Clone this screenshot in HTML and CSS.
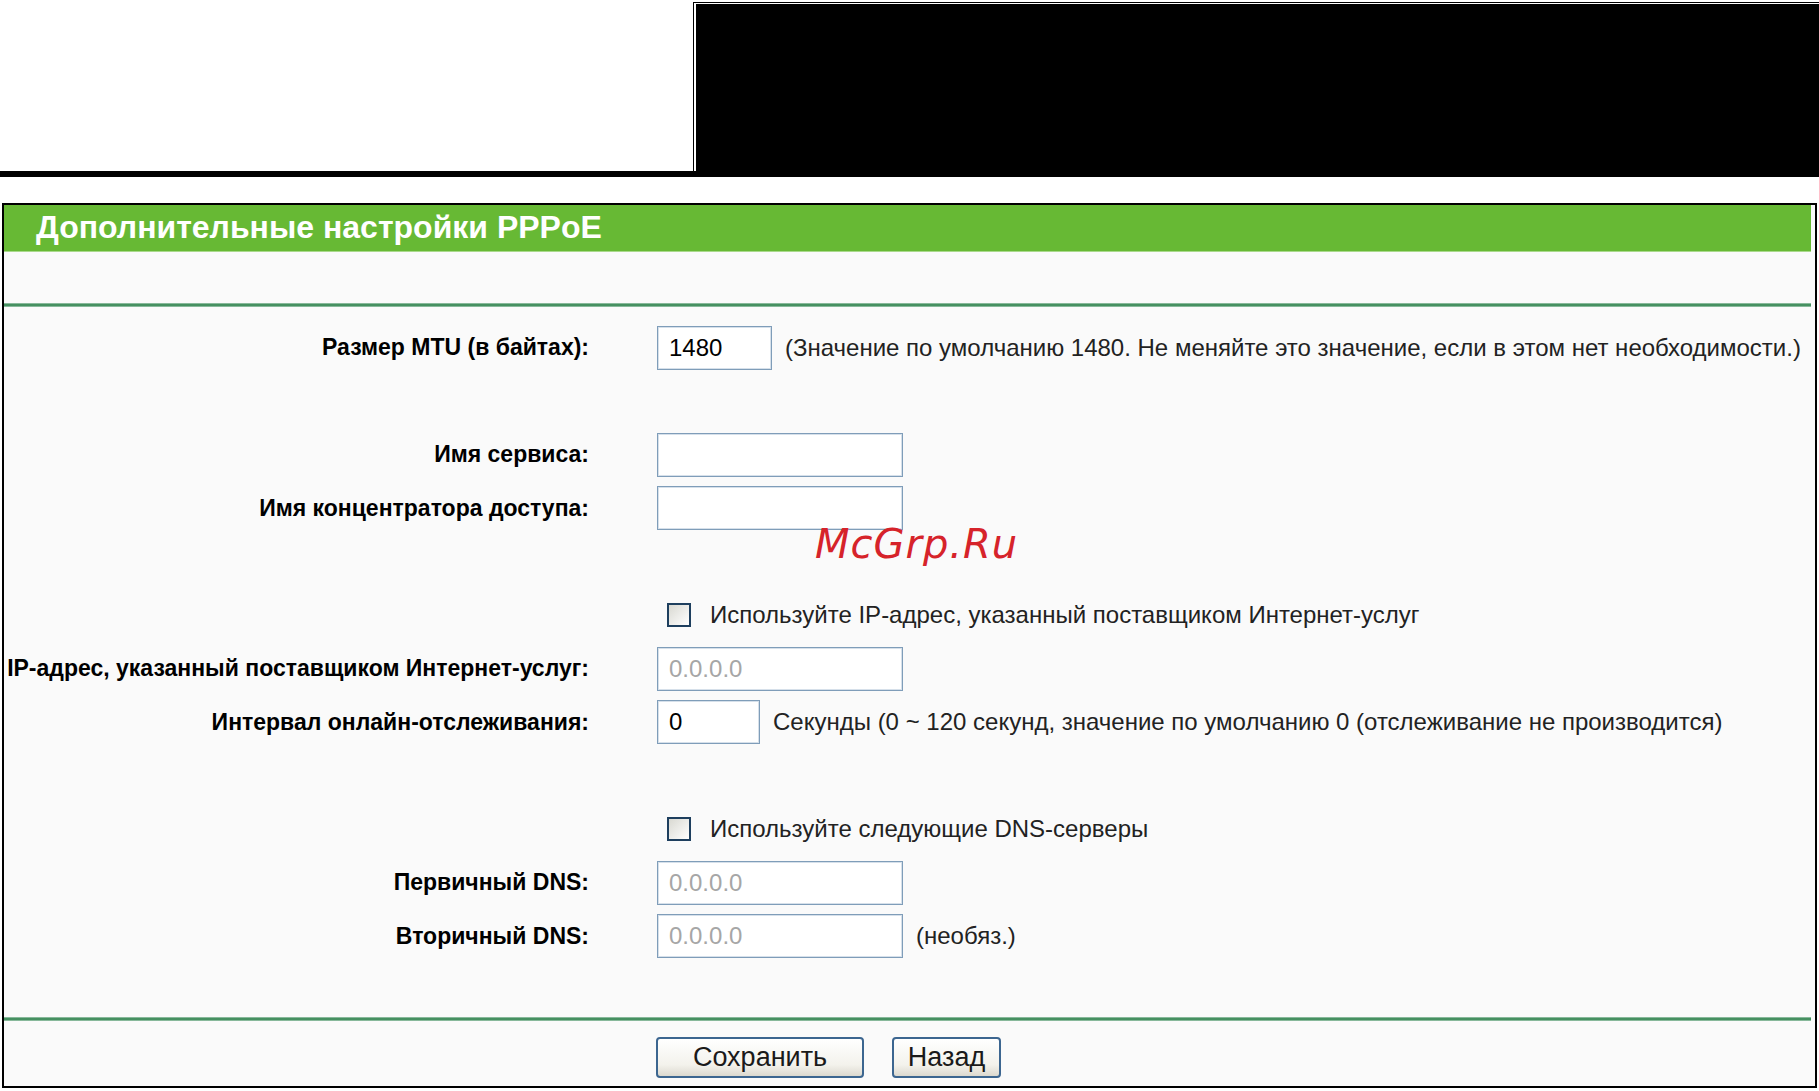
FILE: index.html
```html
<!DOCTYPE html>
<html lang="ru">
<head>
  <meta charset="UTF-8">
  <title>Дополнительные настройки PPPoE</title>
  <link rel="stylesheet" href="styles.css">
</head>
<body>
  <div class="top">
    <div class="top-blank"></div>
    <div class="top-box"><div class="top-fill"></div></div>
  </div>
  <div class="top-bar"></div>

  <div class="panel">
    <div class="panel-title">Дополнительные настройки PPPoE</div>
    <div class="spacer"></div>
    <div class="line"></div>

    <form class="form">
      <div class="row">
        <label class="label" for="mtu">Размер MTU (в байтах):</label>
        <div class="field">
          <input class="text w-mtu" type="text" id="mtu" value="1480">
          <span class="hint">(Значение по умолчанию 1480. Не меняйте это значение, если в этом нет необходимости.)</span>
        </div>
      </div>
      <div class="row"></div>
      <div class="row">
        <label class="label" for="service">Имя сервиса:</label>
        <div class="field"><input class="text w-wide" type="text" id="service"></div>
      </div>
      <div class="row">
        <label class="label" for="ac">Имя концентратора доступа:</label>
        <div class="field"><input class="text w-wide" type="text" id="ac"></div>
      </div>
      <div class="row"></div>
      <div class="row">
        <span class="label"></span>
        <label class="field check">
          <input class="box" type="checkbox">
          <span>Используйте IP-адрес, указанный поставщиком Интернет-услуг</span>
        </label>
      </div>
      <div class="row">
        <label class="label" for="ip">IP-адрес, указанный поставщиком Интернет-услуг:</label>
        <div class="field"><input class="text w-wide off" type="text" id="ip" value="0.0.0.0"></div>
      </div>
      <div class="row">
        <label class="label" for="echo">Интервал онлайн-отслеживания:</label>
        <div class="field">
          <input class="text w-echo" type="text" id="echo" value="0">
          <span class="hint">Секунды (0 ~ 120 секунд, значение по умолчанию 0 (отслеживание не производится)</span>
        </div>
      </div>
      <div class="row"></div>
      <div class="row">
        <span class="label"></span>
        <label class="field check">
          <input class="box" type="checkbox">
          <span>Используйте следующие DNS-серверы</span>
        </label>
      </div>
      <div class="row">
        <label class="label" for="dns1">Первичный DNS:</label>
        <div class="field"><input class="text w-wide off" type="text" id="dns1" value="0.0.0.0"></div>
      </div>
      <div class="row">
        <label class="label" for="dns2">Вторичный DNS:</label>
        <div class="field">
          <input class="text w-wide off" type="text" id="dns2" value="0.0.0.0">
          <span class="hint">(необяз.)</span>
        </div>
      </div>
      <div class="row"></div>
    </form>

    <div class="line"></div>
    <div class="buttons">
      <button class="btn btn-save" type="button">Сохранить</button>
      <button class="btn btn-back" type="button">Назад</button>
    </div>

    <div class="watermark">McGrp.Ru</div>
  </div>
</body>
</html>
```

FILE: styles.css
```css
* {
  box-sizing: border-box;
}
body {
  margin: 0;
  background: #ffffff;
  font-family: 'Liberation Sans', Arial, sans-serif;
  color: #000000;
}
.top {
  display: flex;
  height: 171px;
}
.top-blank {
  width: 693px;
}
.top-box {
  flex: 1;
  margin-top: 2px;
  border-left: 1px solid #000;
  border-top: 1px solid #000;
  padding: 1px 0 0 2px;
  background: #fff;
}
.top-fill {
  height: 100%;
  background: #000;
}
.top-bar {
  height: 6px;
  background: #000;
}
.panel {
  position: relative;
  margin: 26px 2px 0 2px;
  height: 885px;
  border: 2px solid #000;
  background: #fafafa;
  padding-right: 4px;
}
.panel-title {
  height: 47px;
  background: #67b934;
  border-bottom: 1px solid #a9d98c;
  color: #fff;
  font-weight: bold;
  font-size: 32px;
  line-height: 44px;
  padding-left: 32px;
}
.spacer {
  height: 51px;
}
.line {
  height: 4px;
  background: linear-gradient(#a9cdb7, #3f8c5b 40%, #3f8c5b 60%, #a9cdb7);
}
.form {
  padding-top: 14px;
}
.row {
  display: grid;
  grid-template-columns: 585px 1fr;
  column-gap: 68px;
  align-items: center;
  height: 53.5px;
}
.label {
  text-align: right;
  font-weight: bold;
  font-size: 23px;
  white-space: nowrap;
}
.field {
  display: flex;
  align-items: center;
  white-space: nowrap;
}
.text {
  height: 44px;
  border: 1px solid #7f9db9;
  box-shadow: inset 0 0 0 1px #d6e0ea;
  background: #fff;
  font-family: 'Liberation Sans', Arial, sans-serif;
  font-size: 24px;
  padding: 0 11px;
  color: #000;
}
.text.off {
  color: #a6a6a6;
}
.w-mtu {
  width: 115px;
}
.w-wide {
  width: 246px;
}
.w-echo {
  width: 103px;
}
.hint {
  margin-left: 13px;
  font-size: 24px;
  color: #222;
}
.check {
  font-size: 24px;
  color: #222;
}
.box {
  appearance: none;
  -webkit-appearance: none;
  margin: 0 19px 0 10px;
  width: 24px;
  height: 24px;
  border: 2px solid #1e3f5e;
  background: linear-gradient(135deg, #d9d9d2, #ffffff);
}
.buttons {
  display: flex;
  gap: 28px;
  padding: 16px 0 0 652px;
}
.btn {
  height: 41px;
  border: 2px solid #3c6690;
  border-radius: 4px;
  background: linear-gradient(#ffffff, #f3f2ec 70%, #dcd9cf);
  font-family: 'Liberation Sans', Arial, sans-serif;
  font-size: 27px;
  color: #1a1a1a;
  padding: 0;
}
.btn-save {
  width: 208px;
}
.btn-back {
  width: 109px;
}
.watermark {
  position: absolute;
  left: 811px;
  top: 316px;
  color: #d6232a;
  font-family: 'DejaVu Sans', sans-serif;
  font-style: italic;
  font-size: 40px;
  letter-spacing: 1px;
}
```
